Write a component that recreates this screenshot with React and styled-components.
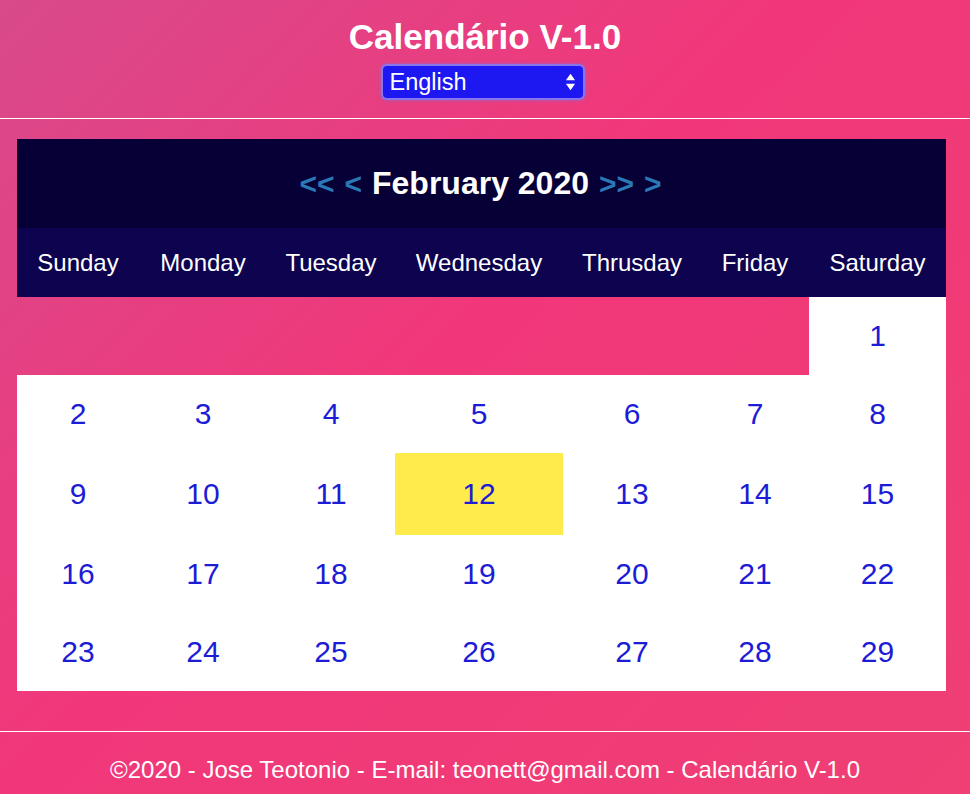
import React, { useState } from "react";
import styled, { createGlobalStyle } from "styled-components";

const GlobalStyle = createGlobalStyle`
  html, body {
    margin: 0;
    padding: 0;
  }
  body {
    font-family: "Liberation Sans", Helvetica, Arial, sans-serif;
    background: #ef3a78;
  }
`;

const weekDays = [
  "Sunday",
  "Monday",
  "Tuesday",
  "Wednesday",
  "Thrusday",
  "Friday",
  "Saturday",
];

// column widths follow the auto table layout of the original
const columns = "122px 128px 128px 168px 138px 108px 137px";

const buildWeeks = () => {
  const firstDay = 6; // Feb 1 2020 is a Saturday
  const total = 29;
  const cells = [];
  for (let i = 0; i < firstDay; i++) cells.push(null);
  for (let d = 1; d <= total; d++) cells.push(d);
  const weeks = [];
  for (let i = 0; i < cells.length; i += 7) weeks.push(cells.slice(i, i + 7));
  return weeks;
};

const App = () => {
  const [lang, setLang] = useState("en");
  const today = 12;
  const weeks = buildWeeks();

  return (
    <Page>
      <GlobalStyle />
      <Header>
        <Title>Calendário V-1.0</Title>
        <SelectWrap>
          <LangSelect value={lang} onChange={(e) => setLang(e.target.value)}>
            <option value="en">English</option>
            <option value="pt">Português</option>
          </LangSelect>
          <SelectArrows viewBox="0 0 12 20">
            <path d="M6 1 L11 8 H1 Z" fill="#fff" />
            <path d="M6 19 L11 12 H1 Z" fill="#fff" />
          </SelectArrows>
        </SelectWrap>
      </Header>

      <Calendar>
        <NavRow>
          <NavArrow>&lt;&lt;</NavArrow>
          <NavArrow>&lt;</NavArrow>
          <MonthLabel>February 2020</MonthLabel>
          <NavArrow>&gt;&gt;</NavArrow>
          <NavArrow>&gt;</NavArrow>
        </NavRow>
        <WeekHead>
          {weekDays.map((d) => (
            <WeekDay key={d}>{d}</WeekDay>
          ))}
        </WeekHead>
        {weeks.map((week, wi) => (
          <WeekRow key={wi}>
            {week.map((day, di) =>
              day === null ? (
                <EmptyCell key={di} />
              ) : (
                <DayCell key={di} isToday={day === today}>
                  {day}
                </DayCell>
              )
            )}
          </WeekRow>
        ))}
      </Calendar>

      <Footer>
        ©2020 - Jose Teotonio - E-mail: teonett@gmail.com - Calendário V-1.0
      </Footer>
    </Page>
  );
};

const Page = styled.div`
  min-height: 794px;
  background: linear-gradient(135deg, #d84a8b 0%, #f1377a 45%, #ef3f74 100%);
  display: flex;
  flex-direction: column;
  color: #fff;
`;

const Header = styled.header`
  display: flex;
  flex-direction: column;
  align-items: center;
  padding: 17px 0 20px;
  gap: 9px;
  border-bottom: 1px solid #fff;
`;

const Title = styled.h1`
  margin: 0;
  font-size: 35px;
  font-weight: 700;
  line-height: 40px;
`;

const SelectWrap = styled.div`
  position: relative;
  width: 200px;
  height: 32px;
  margin-right: 5px;
`;

const LangSelect = styled.select`
  appearance: none;
  width: 100%;
  height: 100%;
  box-sizing: border-box;
  padding: 0 28px 0 7px;
  border: none;
  border-radius: 4px;
  background: #1d18f2;
  color: #fff;
  font-family: "Liberation Sans", Helvetica, Arial, sans-serif;
  font-size: 23.5px;
  box-shadow: 0 0 0 2px rgba(120, 130, 255, 0.75), 0 0 3px 3px rgba(110, 120, 240, 0.4);
  outline: none;
`;

const SelectArrows = styled.svg`
  position: absolute;
  right: 7px;
  top: 6px;
  width: 11px;
  height: 20px;
  pointer-events: none;
`;

const Calendar = styled.div`
  margin: 20px 0 0 17px;
  width: 929px;
  display: flex;
  flex-direction: column;
`;

const NavRow = styled.div`
  height: 89px;
  background: #070036;
  display: flex;
  align-items: center;
  justify-content: center;
  gap: 10px;
  padding-right: 2px;
`;

const NavArrow = styled.span`
  color: #2b78b6;
  font-size: 30px;
  font-weight: 700;
  cursor: pointer;
`;

const MonthLabel = styled.span`
  font-size: 32px;
  font-weight: 700;
  color: #fff;
`;

const WeekHead = styled.div`
  display: grid;
  grid-template-columns: ${columns};
  height: 69px;
  background: #0d034e;
  align-items: center;
`;

const WeekDay = styled.div`
  text-align: center;
  font-size: 24px;
`;

const WeekRow = styled.div`
  display: grid;
  grid-template-columns: ${columns};
  align-items: stretch;
`;

const EmptyCell = styled.div`
  min-height: 78px;
`;

const DayCell = styled.div`
  min-height: ${(props) => (props.isToday ? "82px" : "78px")};
  display: flex;
  align-items: center;
  justify-content: center;
  background: ${(props) => (props.isToday ? "#ffeb4c" : "#fff")};
  color: #1c1bd6;
  font-size: 30px;
`;

const Footer = styled.footer`
  margin-top: 40px;
  border-top: 1px solid #fff;
  flex: 1;
  display: flex;
  align-items: flex-start;
  justify-content: center;
  padding-top: 24px;
  font-size: 24px;
`;

export default App;
